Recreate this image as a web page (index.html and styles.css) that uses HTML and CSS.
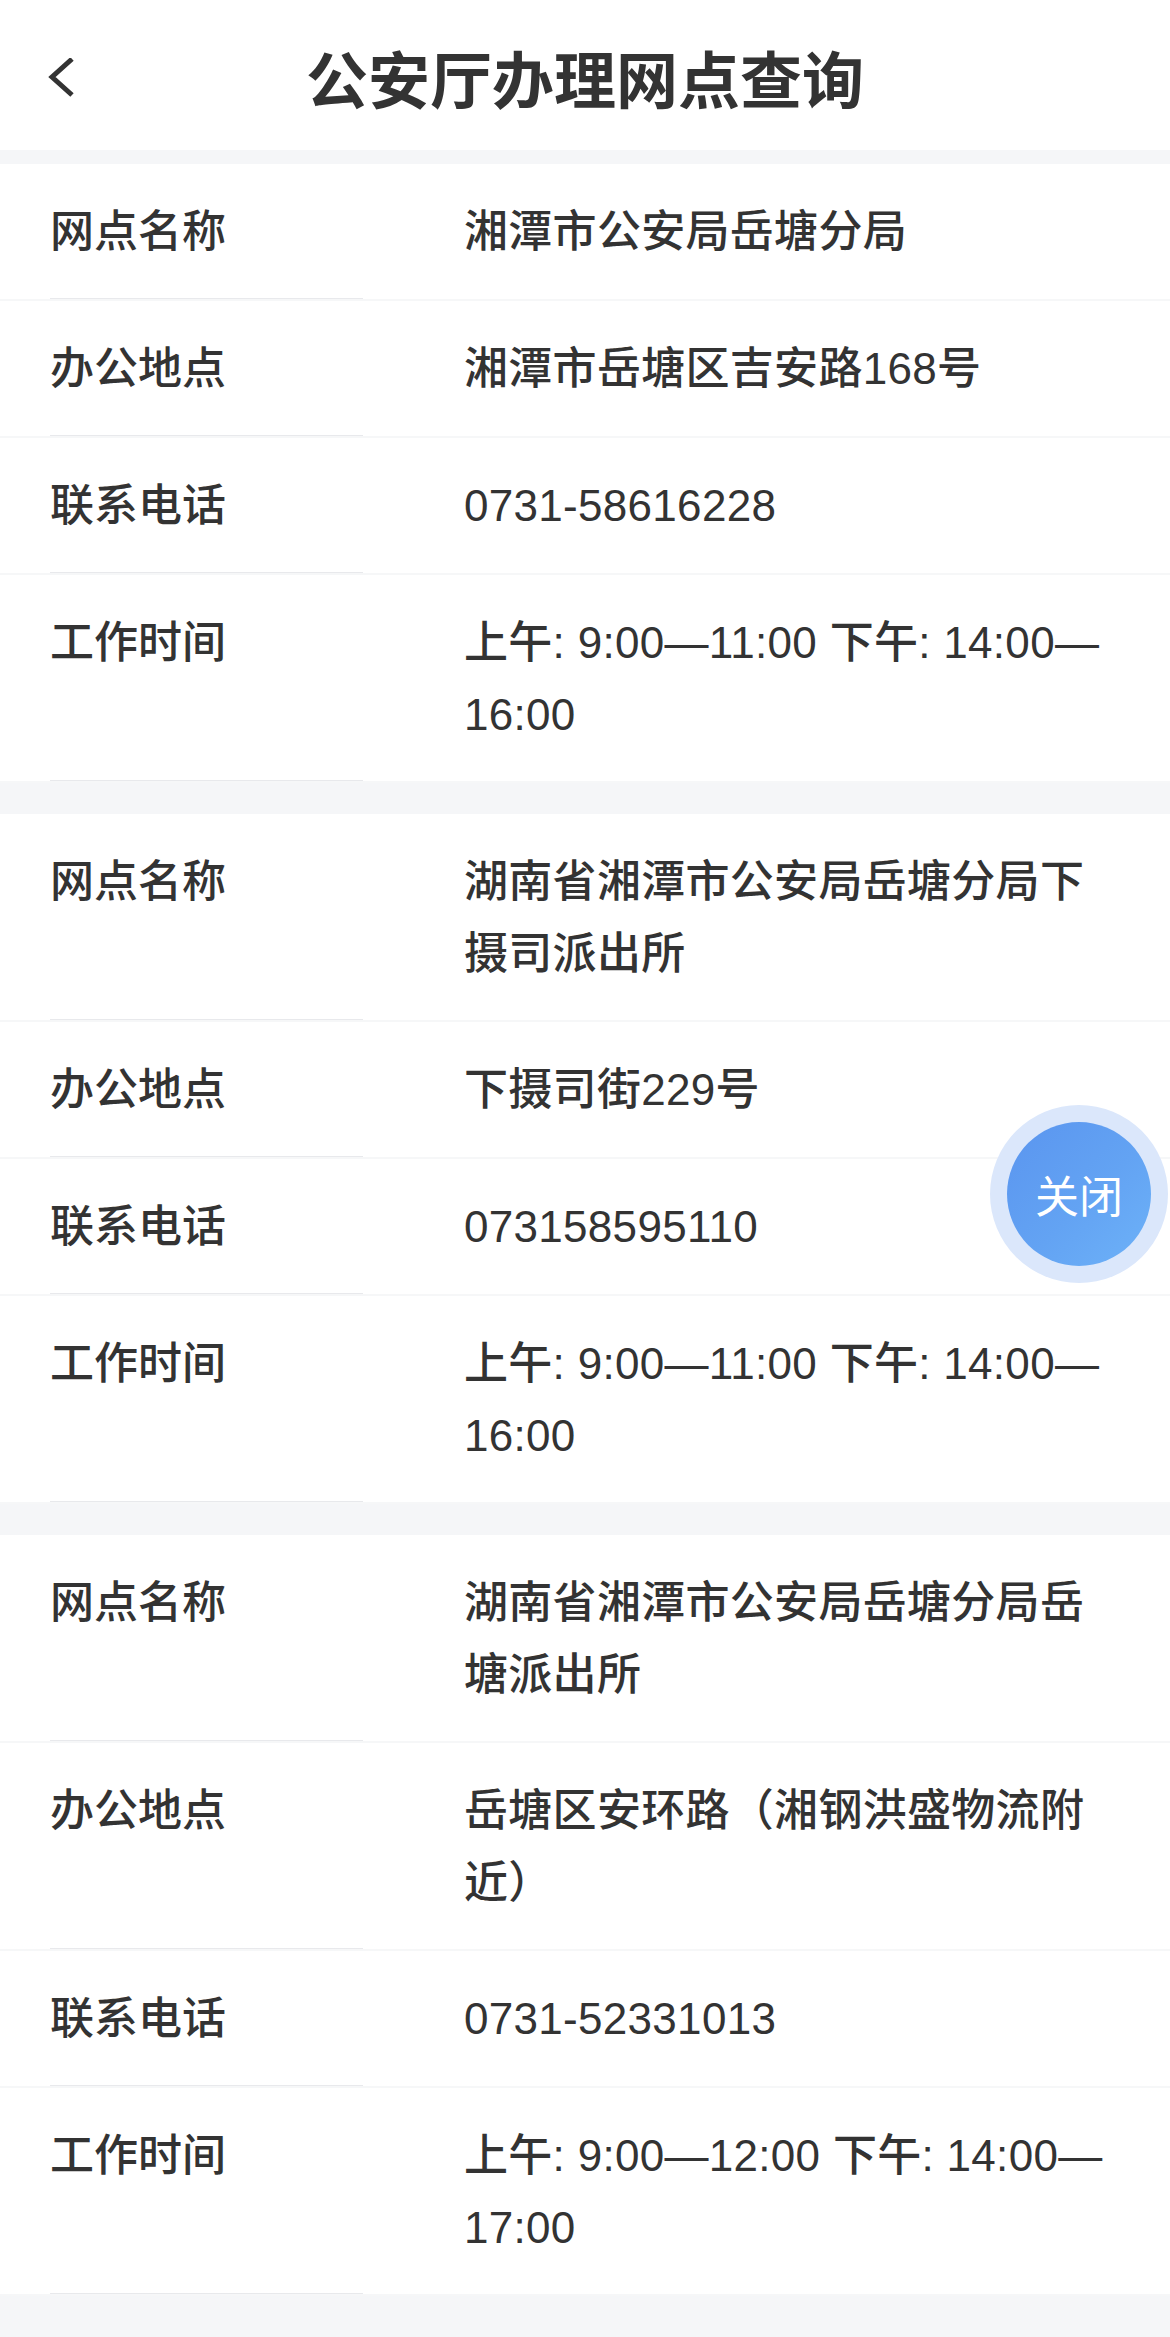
FILE: index.html
```html
<!DOCTYPE html>
<html lang="zh-CN">
<head>
<meta charset="utf-8">
<title>公安厅办理网点查询</title>
<link rel="stylesheet" href="styles.css">
</head>
<body>
<header class="header">
  <span class="back">
    <svg width="40" height="50" viewBox="0 0 40 50"><polyline points="24,1 4,19 24,37" fill="none" stroke="#333" stroke-width="5" stroke-linejoin="miter"/></svg>
  </span>
  <h1 class="title">公安厅办理网点查询</h1>
</header>
<main class="list">
  <section class="card">
    <div class="row"><div class="label">网点名称</div><div class="value">湘潭市公安局岳塘分局</div></div>
    <div class="row"><div class="label">办公地点</div><div class="value">湘潭市岳塘区吉安路168号</div></div>
    <div class="row"><div class="label">联系电话</div><div class="value">0731-58616228</div></div>
    <div class="row"><div class="label">工作时间</div><div class="value">上午: 9:00—11:00 下午: 14:00—16:00</div></div>
  </section>
  <section class="card">
    <div class="row"><div class="label">网点名称</div><div class="value">湖南省湘潭市公安局岳塘分局下摄司派出所</div></div>
    <div class="row"><div class="label">办公地点</div><div class="value">下摄司街229号</div></div>
    <div class="row"><div class="label">联系电话</div><div class="value">073158595110</div></div>
    <div class="row"><div class="label">工作时间</div><div class="value">上午: 9:00—11:00 下午: 14:00—16:00</div></div>
  </section>
  <section class="card">
    <div class="row"><div class="label">网点名称</div><div class="value">湖南省湘潭市公安局岳塘分局岳塘派出所</div></div>
    <div class="row"><div class="label">办公地点</div><div class="value">岳塘区安环路（湘钢洪盛物流附近）</div></div>
    <div class="row"><div class="label">联系电话</div><div class="value">0731-52331013</div></div>
    <div class="row"><div class="label">工作时间</div><div class="value">上午: 9:00—12:00 下午: 14:00—17:00</div></div>
  </section>
</main>
<div class="close-btn"><div class="close-inner">关闭</div></div>
</body>
</html>
```
FILE: styles.css
```css
* { box-sizing: border-box; }
html, body {
  margin: 0;
  padding: 0;
  background: #f5f6f8;
  font-family: "Liberation Sans", "Noto Sans CJK SC", sans-serif;
  color: #333;
}
.header {
  height: 150px;
  background: #fff;
  display: flex;
  align-items: center;
  justify-content: center;
  position: relative;
}
.back {
  position: absolute;
  left: 48px;
  top: 58px;
  width: 40px;
  height: 50px;
}
.back svg { display: block; }
.title {
  margin: 0;
  font-family: "Noto Sans CJK SC", sans-serif;
  font-size: 62px;
  font-weight: 700;
  color: #333;
  line-height: 1;
  margin-top: 4px;
}
.list {
  padding-top: 14px;
  padding-bottom: 40px;
  display: flex;
  flex-direction: column;
  gap: 31px;
}
.card {
  background: #fff;
}
.row {
  display: flex;
  border-bottom: 2px solid #f6f7f8;
  font-size: 44px;
  line-height: 72px;
}
.label {
  width: 313px;
  margin-left: 50px;
  flex: none;
  padding: 32px 0 30px;
  border-bottom: 1px solid #e8e9ec;
  color: #333;
  font-weight: 500;
}
.value {
  width: 652px;
  margin-left: 101px;
  padding: 32px 0 30px;
  color: #333;
  font-weight: 500;
  letter-spacing: 0.3px;
}
.close-btn {
  position: absolute;
  left: 990px;
  top: 1105px;
  width: 178px;
  height: 178px;
  border-radius: 50%;
  background: #dbe7fb;
  display: flex;
  align-items: center;
  justify-content: center;
}
.close-inner {
  width: 144px;
  height: 144px;
  border-radius: 50%;
  background: linear-gradient(135deg, #5a95ef 0%, #63a3f3 55%, #6db2f8 100%);
  color: #fff;
  font-family: "Noto Sans CJK SC", sans-serif;
  font-size: 44px;
  display: flex;
  align-items: center;
  justify-content: center;
}
```
